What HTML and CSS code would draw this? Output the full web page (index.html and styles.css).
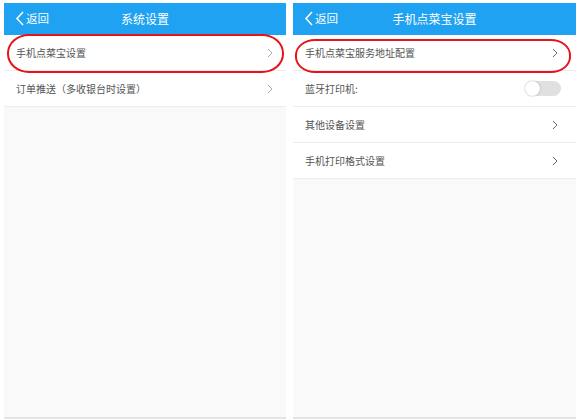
FILE: index.html
```html
<!DOCTYPE html>
<html>
<head>
<meta charset="utf-8">
<title>设置</title>
<link rel="stylesheet" href="styles.css">
</head>
<body>
  <div class="screens">
    <div class="phone">
      <div class="topbar">
        <span class="back">
          <svg width="10" height="15" viewBox="0 0 10 15"><path d="M8 1 L2 7.5 L8 14" fill="none" stroke="#fff" stroke-width="1.6"/></svg>返回
        </span>
        <span class="title">系统设置</span>
      </div>
      <div class="list">
        <div class="row">
          <span>手机点菜宝设置</span>
          <svg class="arrow light" width="6" height="10" viewBox="0 0 6 10"><path d="M1 1 L5 5 L1 9" fill="none" stroke="currentColor" stroke-width="1"/></svg>
        </div>
        <div class="row">
          <span>订单推送（多收银台时设置）</span>
          <svg class="arrow light" width="6" height="10" viewBox="0 0 6 10"><path d="M1 1 L5 5 L1 9" fill="none" stroke="currentColor" stroke-width="1"/></svg>
        </div>
      </div>
      <div class="mark mark-left"></div>
    </div>

    <div class="phone wide">
      <div class="topbar">
        <span class="back">
          <svg width="10" height="15" viewBox="0 0 10 15"><path d="M8 1 L2 7.5 L8 14" fill="none" stroke="#fff" stroke-width="1.6"/></svg>返回
        </span>
        <span class="title">手机点菜宝设置</span>
      </div>
      <div class="list">
        <div class="row">
          <span>手机点菜宝服务地址配置</span>
          <svg class="arrow" width="6" height="10" viewBox="0 0 6 10"><path d="M1 1 L5 5 L1 9" fill="none" stroke="currentColor" stroke-width="1"/></svg>
        </div>
        <div class="row">
          <span>蓝牙打印机:</span>
          <span class="switch"><span class="knob"></span></span>
        </div>
        <div class="row">
          <span>其他设备设置</span>
          <svg class="arrow" width="6" height="10" viewBox="0 0 6 10"><path d="M1 1 L5 5 L1 9" fill="none" stroke="currentColor" stroke-width="1"/></svg>
        </div>
        <div class="row">
          <span>手机打印格式设置</span>
          <svg class="arrow" width="6" height="10" viewBox="0 0 6 10"><path d="M1 1 L5 5 L1 9" fill="none" stroke="currentColor" stroke-width="1"/></svg>
        </div>
      </div>
      <div class="mark mark-right"></div>
    </div>
  </div>
</body>
</html>
```

FILE: styles.css
```css
body {
  margin: 0;
  background-color: #fff;
  font-family: "Noto Sans CJK SC", "Liberation Sans", sans-serif;
}

.screens {
  display: flex;
  gap: 7px;
  padding: 3px 0 0 4px;
  height: 420px;
  box-sizing: border-box;
}

.phone {
  position: relative;
  display: flex;
  flex-direction: column;
  background-color: #f9f9f9;
  height: 414px;
  border-bottom: 2px solid #e4e4e4;
  width: 282px;
}

.phone.wide {
  width: auto;
  flex: 1;
}

.topbar {
  position: relative;
  display: flex;
  align-items: center;
  justify-content: center;
  height: 32px;
  background-color: #1fa2f1;
  color: #fff;
}

.back {
  position: absolute;
  left: 11px;
  top: 8px;
  display: flex;
  align-items: center;
  font-size: 11.5px;
  line-height: 15px;
}

.back svg {
  margin-right: 1px;
}

.title {
  font-size: 12px;
  margin-top: -1px;
}

.row {
  display: flex;
  align-items: center;
  justify-content: space-between;
  height: 35px;
  padding: 0 13px 0 12px;
  background-color: #fff;
  border-bottom: 1.5px solid #ececec;
  font-size: 10px;
  color: #555;
}

.wide .row {
  padding-right: 18px;
}

.arrow {
  color: #666;
}

.arrow.light {
  color: #aaa;
}

.switch {
  width: 36px;
  height: 15px;
  border-radius: 8px;
  background-color: #e0e0e0;
  margin-right: -3px;
  display: flex;
  align-items: center;
}

.knob {
  width: 15px;
  height: 15px;
  border-radius: 50%;
  background-color: #fff;
  box-shadow: 0 0 2px rgba(0, 0, 0, 0.3);
}

/* red hand-drawn highlights */
.mark {
  position: absolute;
  border: 2px solid #e8121a;
  box-sizing: border-box;
}

.mark-left {
  left: 3px;
  top: 31px;
  width: 277px;
  height: 39px;
  border-radius: 22px / 19px;
}

.mark-right {
  left: 2px;
  top: 36px;
  width: 276px;
  height: 34px;
  border-radius: 20px / 16px;
}
```
